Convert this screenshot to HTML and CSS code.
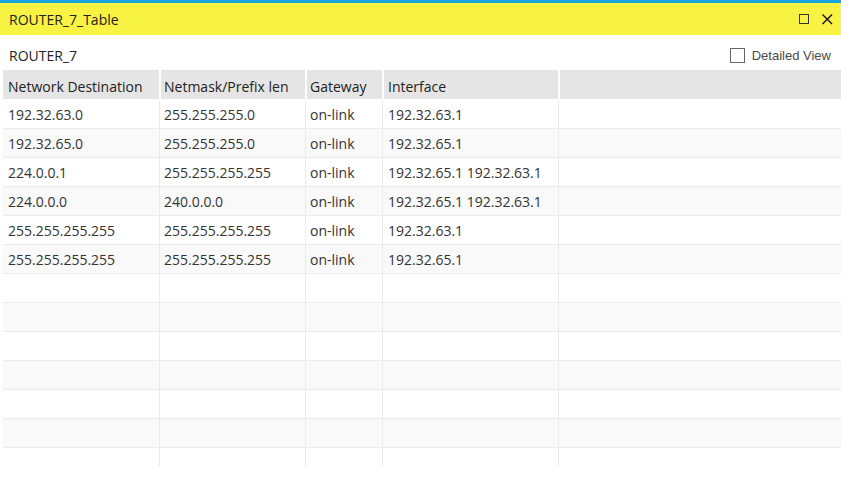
FILE: index.html
```html
<!DOCTYPE html>
<html>
<head>
<meta charset="utf-8">
<link rel="stylesheet" href="styles.css">
</head>
<body>
<div class="window">
  <div class="topline"></div>
  <div class="titlebar">
    <span class="title">ROUTER_7_Table</span>
    <div class="controls">
      <svg class="icon" width="11" height="11" viewBox="0 0 11 11"><rect x="0.5" y="0.5" width="9" height="9" fill="none" stroke="#333" stroke-width="1"/></svg>
      <svg class="icon" width="11" height="11" viewBox="0 0 11 11"><path d="M0.5 0.5 L10 10 M10 0.5 L0.5 10" stroke="#111" stroke-width="1.4" fill="none"/></svg>
    </div>
  </div>
  <div class="toolbar">
    <span class="router">ROUTER_7</span>
    <label class="detail"><span class="checkbox"></span><span>Detailed View</span></label>
  </div>
  <div class="table">
    <div class="row head">
      <div class="cell c1">Network Destination</div>
      <div class="cell c2">Netmask/Prefix len</div>
      <div class="cell c3">Gateway</div>
      <div class="cell c4">Interface</div>
      <div class="cell c5"></div>
    </div>
    <div class="row"><div class="cell c1">192.32.63.0</div><div class="cell c2">255.255.255.0</div><div class="cell c3">on-link</div><div class="cell c4">192.32.63.1</div><div class="cell c5"></div></div>
    <div class="row alt"><div class="cell c1">192.32.65.0</div><div class="cell c2">255.255.255.0</div><div class="cell c3">on-link</div><div class="cell c4">192.32.65.1</div><div class="cell c5"></div></div>
    <div class="row"><div class="cell c1">224.0.0.1</div><div class="cell c2">255.255.255.255</div><div class="cell c3">on-link</div><div class="cell c4">192.32.65.1 192.32.63.1</div><div class="cell c5"></div></div>
    <div class="row alt"><div class="cell c1">224.0.0.0</div><div class="cell c2">240.0.0.0</div><div class="cell c3">on-link</div><div class="cell c4">192.32.65.1 192.32.63.1</div><div class="cell c5"></div></div>
    <div class="row"><div class="cell c1">255.255.255.255</div><div class="cell c2">255.255.255.255</div><div class="cell c3">on-link</div><div class="cell c4">192.32.63.1</div><div class="cell c5"></div></div>
    <div class="row alt"><div class="cell c1">255.255.255.255</div><div class="cell c2">255.255.255.255</div><div class="cell c3">on-link</div><div class="cell c4">192.32.65.1</div><div class="cell c5"></div></div>
    <div class="row"><div class="cell c1"></div><div class="cell c2"></div><div class="cell c3"></div><div class="cell c4"></div><div class="cell c5"></div></div>
    <div class="row alt"><div class="cell c1"></div><div class="cell c2"></div><div class="cell c3"></div><div class="cell c4"></div><div class="cell c5"></div></div>
    <div class="row"><div class="cell c1"></div><div class="cell c2"></div><div class="cell c3"></div><div class="cell c4"></div><div class="cell c5"></div></div>
    <div class="row alt"><div class="cell c1"></div><div class="cell c2"></div><div class="cell c3"></div><div class="cell c4"></div><div class="cell c5"></div></div>
    <div class="row"><div class="cell c1"></div><div class="cell c2"></div><div class="cell c3"></div><div class="cell c4"></div><div class="cell c5"></div></div>
    <div class="row alt"><div class="cell c1"></div><div class="cell c2"></div><div class="cell c3"></div><div class="cell c4"></div><div class="cell c5"></div></div>
    <div class="row"><div class="cell c1"></div><div class="cell c2"></div><div class="cell c3"></div><div class="cell c4"></div><div class="cell c5"></div></div>
  </div>
</div>
</body>
</html>
```
FILE: styles.css
```css
html, body {
  margin: 0;
  padding: 0;
  background: #ffffff;
}
body {
  font-family: "Open Sans", "Noto Sans", sans-serif;
  font-size: 14px;
  color: #333333;
  width: 841px;
  height: 481px;
  overflow: hidden;
}
.window {
  display: flex;
  flex-direction: column;
  height: 481px;
}
.topline {
  height: 3px;
  background: #1ba5de;
}
.titlebar {
  height: 32px;
  background: #f8f243;
  display: flex;
  align-items: center;
  justify-content: space-between;
  padding: 0 8px 0 9px;
}
.title {
  font-size: 14px;
  color: #222222;
}
.controls {
  display: flex;
  gap: 12px;
  align-items: center;
  padding-top: 1px;
}
.icon {
  display: block;
}
.toolbar {
  height: 35px;
  box-sizing: border-box;
  padding: 5px 10px 0 9px;
  display: flex;
  align-items: center;
  justify-content: space-between;
}
.router {
  font-size: 14px;
  color: #222222;
}
.detail {
  display: flex;
  align-items: center;
  gap: 7px;
  font-family: "Liberation Sans", Arial, sans-serif;
  font-size: 13px;
  color: #4a4a4a;
}
.checkbox {
  width: 13px;
  height: 13px;
  border: 1px solid #666666;
  background: #ffffff;
}
.table {
  margin-left: 3px;
  height: 396px;
  overflow: hidden;
}
.row {
  display: flex;
  height: 29px;
  box-sizing: border-box;
  border-bottom: 1px solid #ebebeb;
}
.row.alt {
  background: #f9f9f9;
}
.row.head {
  height: 30px;
  background: #e5e5e5;
  border-bottom: 1px solid #ffffff;
  color: #222222;
}
.cell {
  box-sizing: border-box;
  padding-left: 5px;
  display: flex;
  align-items: center;
  white-space: nowrap;
  border-right: 1px solid #ebebeb;
}
.c1 { width: 157px; }
.c2 { width: 146px; padding-left: 4px; }
.c3 { width: 77px; padding-left: 4px; }
.c4 { width: 176px; padding-left: 5px; }
.c5 { flex: 1; border-right: none; }
.head .cell {
  border-right: 1px solid #ffffff;
  border-left: 1px solid #ffffff;
  padding-top: 3px;
}
.head .cell.c1 {
  border-left: none;
}
.head .c2, .head .c3 { padding-left: 3px; }
.head .c4 { padding-left: 4px; }
.head .c5 { border-right: none; }
```
